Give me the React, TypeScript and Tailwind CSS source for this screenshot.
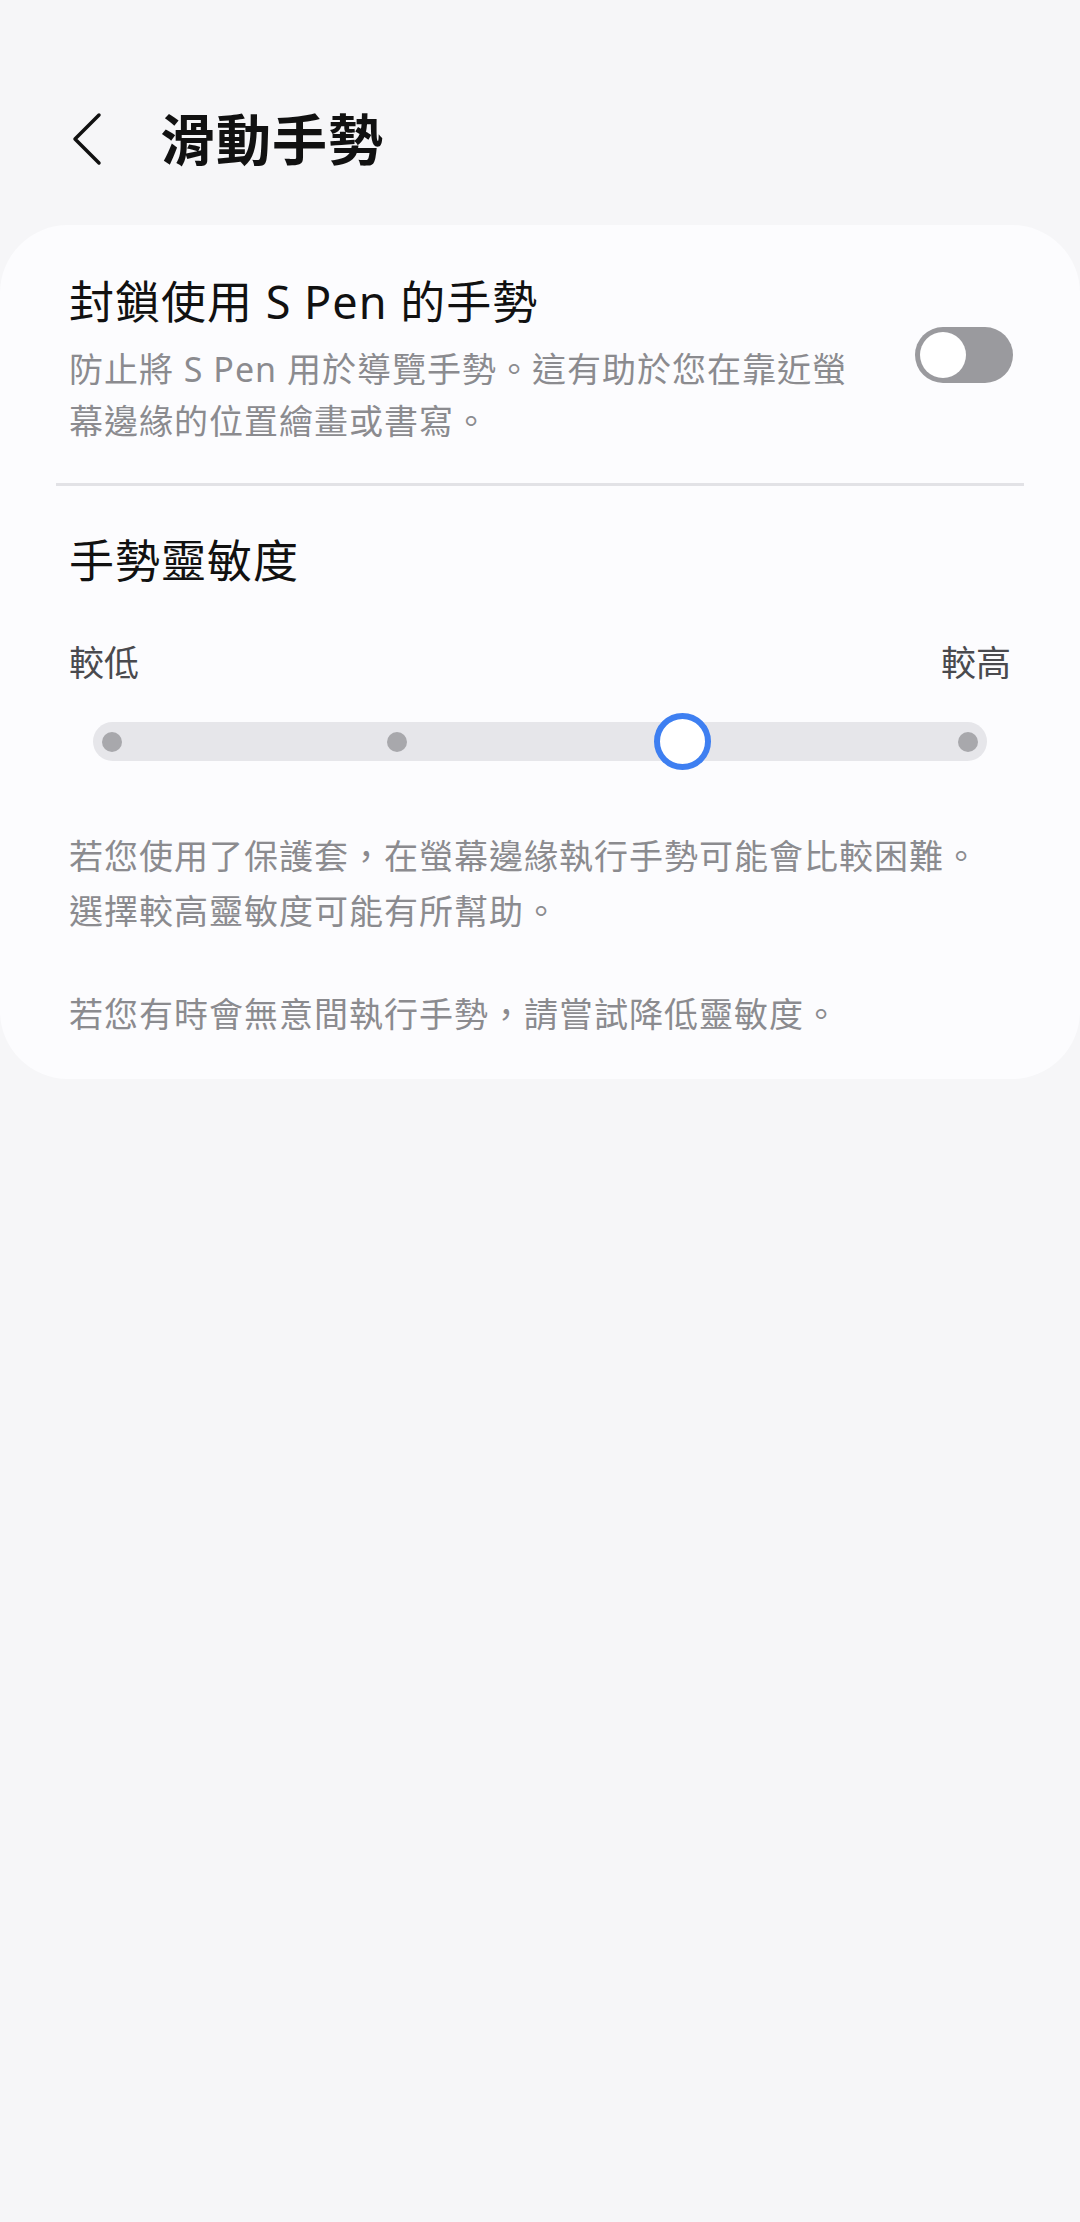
import React from 'react';

const FONT = { fontFamily: '"Noto Sans", "Noto Sans CJK TC", sans-serif' };

function BackChevron() {
  return (
    <svg width="32" height="54" viewBox="0 0 32 54" fill="none" className="shrink-0">
      <path d="M28 3 L4 27 L28 51" stroke="#111" strokeWidth="3.5" strokeLinecap="round" strokeLinejoin="round" />
    </svg>
  );
}

function Toggle() {
  return (
    <div className="mb-[10px] flex h-[56px] w-[98px] shrink-0 items-center rounded-full bg-[#9a9a9e] pl-[5px]">
      <div className="h-[46px] w-[46px] rounded-full bg-white" />
    </div>
  );
}

function SensitivitySlider({ value }: { value: number }) {
  const stops = [0, 1, 2, 3];
  return (
    <div className="mx-[24px] flex h-[39px] items-center justify-between rounded-full bg-[#e6e6ea] px-[9px]">
      {stops.map((s) => (
        <div key={s} className="flex h-5 w-5 items-center justify-center">
          {s === value ? (
            <div className="h-[57px] w-[57px] shrink-0 rounded-full border-[6px] border-[#3e7ff1] bg-white" />
          ) : (
            <div className="h-5 w-5 rounded-full bg-[#a8a8ac]" />
          )}
        </div>
      ))}
    </div>
  );
}

export default function App() {
  return (
    <div className="min-h-screen bg-[#f6f6f8] pt-[111px]" style={FONT}>
      <header className="flex h-[56px] items-center pl-[71px]">
        <BackChevron />
        <h1 className="ml-[57px] text-[55px] font-bold leading-[56px] tracking-[1px] text-[#111]">滑動手勢</h1>
      </header>

      <section className="mt-[58px] rounded-[68px] bg-[#fcfcfe] pb-[37px] pt-[48px]">
        <div className="flex items-center justify-between pl-[69px] pr-[67px]">
          <div>
            <div className="text-[45px] leading-[58px] tracking-[1px] text-[#111]">封鎖使用 S Pen 的手勢</div>
            <p className="mt-[12px] text-[34px] leading-[52px] tracking-[1px] text-[#8b8b8f]">
              <span className="block">防止將 S Pen 用於導覽手勢。這有助於您在靠近螢</span>
              <span className="block">幕邊緣的位置繪畫或書寫。</span>
            </p>
          </div>
          <Toggle />
        </div>

        <div className="mx-[56px] mt-[36px] h-[3px] bg-[#e2e2e6]" />

        <div className="px-[69px]">
          <div className="mt-[47px] text-[45px] leading-[56px] tracking-[1px] text-[#111]">手勢靈敏度</div>

          <div className="mt-[51px] flex justify-between text-[35px] leading-[46px] text-[#4a4a4e]">
            <span>較低</span>
            <span>較高</span>
          </div>

          <div className="mt-[36px]">
            <SensitivitySlider value={2} />
          </div>

          <p className="mt-[68px] text-[34px] leading-[55px] tracking-[1px] text-[#8b8b8f]">
            <span className="block">若您使用了保護套，在螢幕邊緣執行手勢可能會比較困難。</span>
            <span className="block">選擇較高靈敏度可能有所幫助。</span>
          </p>
          <p className="mt-[48px] text-[34px] leading-[55px] tracking-[1px] text-[#8b8b8f]">
            若您有時會無意間執行手勢，請嘗試降低靈敏度。
          </p>
        </div>
      </section>
    </div>
  );
}
